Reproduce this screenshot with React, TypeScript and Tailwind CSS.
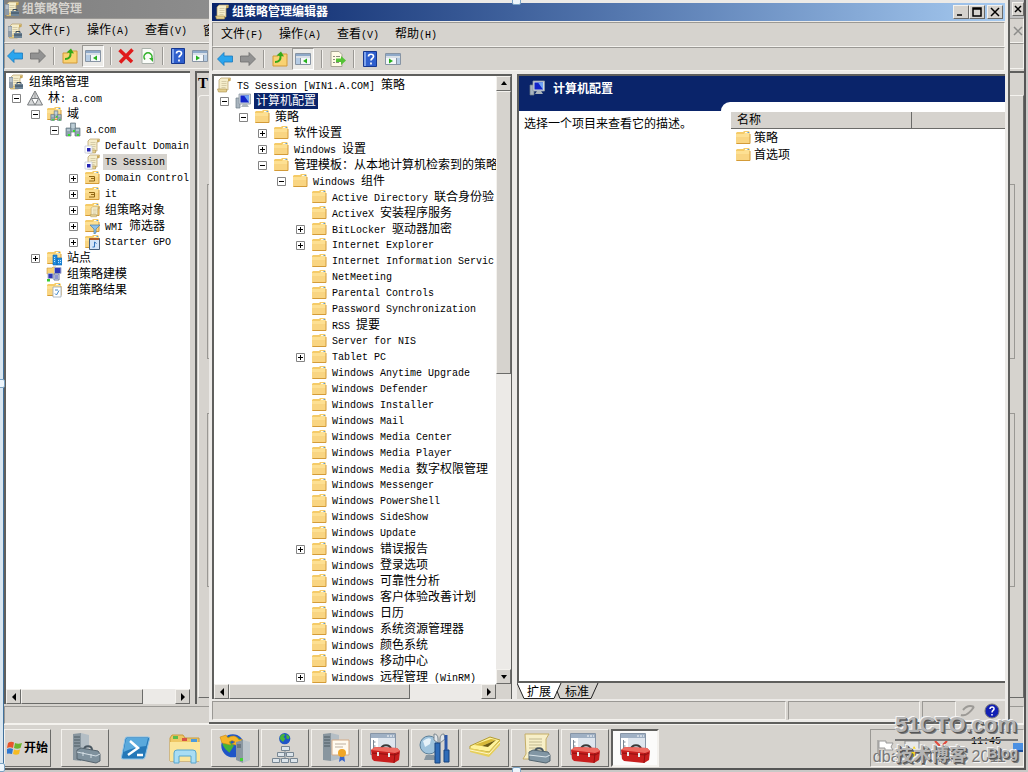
import type { ReactNode } from "react";
import clsx from "clsx";

// --- SHARED STYLES ---
const raised = "bg-[#d6d3ce] border border-t-[#f4f2ee] border-l-[#f4f2ee] border-r-[#6b6b69] border-b-[#6b6b69]";
const sunken = "border border-t-[#9a9894] border-l-[#9a9894] border-r-[#f4f2ee] border-b-[#f4f2ee]";

// Latin runs sit in a small monospace face, Chinese runs in the CJK face
function Label({ text }: { text: string }) {
  return (
    <span className="whitespace-pre">
      {text.split(/([\x20-\x7e]+)/).filter(Boolean).map((part, i) => (
        <span key={i} className={/^[\x20-\x7e]/.test(part) ? "text-[10px]" : "font-['Noto_Sans_CJK_SC',sans-serif] text-[12px]"}>
          {part}
        </span>
      ))}
    </span>
  );
}

// --- SMALL ICONS ---
function Svg({ children, size = 16 }: { children: ReactNode; size?: number }) {
  return (
    <svg width={size} height={size} viewBox={`0 0 ${size} ${size}`} className="shrink-0" aria-hidden="true">
      {children}
    </svg>
  );
}

const folderShape = (
  <>
    <path d="M1 3 2 2h6l1-1h4.5L15 2V14H1z" fill="#f5cb68" />
    <path d="M1 4h8l1-1.5h5V13.5H1z" fill="#fde093" />
    <path d="M1 7h14v7H1z" fill="#f9d582" />
    <path d="M1.500 13.500h13.500V4" fill="none" stroke="#d39b38" />
    <path d="M10 2.500h3" stroke="#fffbe8" />
    <path d="M12.500 2.500h1.500" stroke="#5798d8" />
  </>
);

const scrollShape = (
  <>
    <path d="M5 1h9.500l-1 3H12v9H3V3z" fill="#f5edcb" stroke="#b49b62" strokeWidth=".7" />
    <path d="M12 1.500h2.500V4H12z" fill="#caa95a" />
    <path d="M1.500 12h9v3h-8z" fill="#e4cf8e" stroke="#a98e4c" strokeWidth=".6" />
    <path d="M5.500 4.500h5M5.500 6.500h5M5.500 8.500h5M5.500 10.500h4" stroke="#c9bd98" strokeWidth=".7" />
  </>
);

const FolderIcon = () => <Svg>{folderShape}</Svg>;
const ScrollIcon = () => <Svg>{scrollShape}</Svg>;

const ConsoleIcon = () => (
  <Svg>
    {scrollShape}
    <path d="M1 3h4v11H1z" fill="#8e9aa5" />
    <path d="M1.500 5h3M1.500 7h3" stroke="#dfe6ec" />
    <path d="M7 10h8v5H7z" fill="#6d8497" />
    <path d="M9 10V8.500h4V10M7 12h8" fill="none" stroke="#37495a" />
  </Svg>
);

const ForestIcon = () => (
  <Svg>
    <path d="M8 1 15.500 15H.5z" fill="#d5d7d8" stroke="#777b7e" />
    <path d="M4.500 8.500h7L8 15z" fill="#fff" stroke="#777b7e" />
    <path d="M8 2v6" stroke="#999" />
  </Svg>
);

const serversShape = (
  <>
    <path d="M5.500 1h5v9h-5z" fill="#9fb2bd" stroke="#657680" strokeWidth=".7" />
    <path d="M1 6h5v8H1zM10 6h5v8h-5z" fill="#8ea3af" stroke="#657680" strokeWidth=".7" />
    <path d="M6.500 3h3M6.500 5h3M2 8h3M11 8h3" stroke="#dce9ef" />
    <path d="M3 12h2v2H3zM12 12h2v2h-2zM8 8h2v2H8z" fill="#34dc2c" />
  </>
);
const DomainIcon = () => <Svg>{serversShape}</Svg>;

const DomainsFolderIcon = () => (
  <Svg>
    {folderShape}
    <g transform="translate(4 4) scale(.75)">{serversShape}</g>
  </Svg>
);

const LinkIcon = () => (
  <Svg>
    <g transform="translate(1 0)">{scrollShape}</g>
    <path d="M1 8h7v7H1z" fill="#fff" stroke="#c5cbd8" strokeWidth=".8" />
    <path d="M3 10h3.500v3.500H3z" fill="#2525b5" />
  </Svg>
);

const OuIcon = () => (
  <Svg>
    {folderShape}
    <path d="M5 6.500h5.500v4.500H5M7 8.500h3" fill="none" stroke="#8f6614" />
  </Svg>
);

const ObjectsIcon = () => (
  <Svg>
    {folderShape}
    <g transform="translate(5 4) scale(.72)">{scrollShape}</g>
  </Svg>
);

const FilterIcon = () => (
  <Svg>
    {folderShape}
    <path d="M6 7h10l-4 4v4l-2 1v-5z" fill="#8dc1ea" stroke="#4a7da8" strokeWidth=".7" />
  </Svg>
);

const StarterIcon = () => (
  <Svg>
    {folderShape}
    <path d="M5.500 4.500h10v11h-10z" fill="#d3e6f8" stroke="#47617d" />
    <path d="M6 4h9v2H6z" fill="#b25e2c" />
    <path d="M10.500 8v5M10.500 8l2 1.500M8.500 13h2" fill="none" stroke="#2f74bd" />
  </Svg>
);

const SitesIcon = () => (
  <Svg>
    {folderShape}
    <path d="M7 5h4v10H7zM11 8h5v7h-5z" fill="#218de0" stroke="#0f62ad" strokeWidth=".6" />
    <path d="M8.500 7v6M12.500 10v3M14.500 10v3" stroke="#bfe3ff" strokeDasharray="1 1" />
  </Svg>
);

const ModelingIcon = () => (
  <Svg>
    <path d="M1 2h5l1-1h3v7H1z" fill="#f7d276" stroke="#cf9a3c" strokeWidth=".6" />
    <path d="M8.500 1.500h6.500v6H8.500zM2 7.500h5v5H2z" fill="#3038b8" stroke="#aab3cc" />
    <path d="M8 8h5v6H8z" fill="#e8edf5" stroke="#6f7ca0" />
    <path d="M9 10h3M9 12h3" stroke="#3543b5" />
    <path d="M1 13h3v2.500H1z" fill="#37c832" />
  </Svg>
);

const ResultsIcon = () => (
  <Svg>
    {folderShape}
    <path d="M7 5h8v10H7z" fill="#fff" stroke="#9aa8b6" strokeWidth=".8" />
    <path d="M9 11.500 10.500 13 13 8.500M9 8h3" fill="none" stroke="#3f86ca" />
  </Svg>
);

const ComputerIcon = () => (
  <Svg>
    <path d="M1 5h4v10H1z" fill="#a9b5bf" stroke="#6f7d88" strokeWidth=".7" />
    <path d="M4 1h11.500v10H4z" fill="#cfd8df" stroke="#8b98a3" strokeWidth=".8" />
    <path d="M5.500 2.500h8.500v7H5.500z" fill="#1224c8" />
    <path d="M9 2.500h5v7z" fill="#6da2f5" />
    <path d="M8 11h4l2 3H6z" fill="#aeb7bd" />
  </Svg>
);

// --- TOOLBAR ICONS ---
const Arrow = ({ forward }: { forward?: boolean }) => (
  <Svg>
    {forward ? (
      <path d="M15.500 8 9 1.500V5H.5v6H9v3.500z" fill="#929292" stroke="#6e6e6e" strokeWidth=".8" />
    ) : (
      <path d="M.5 8 7 1.500V5h8.500v6H7v3.500z" fill="#2ba5ee" stroke="#1b79bd" strokeWidth=".8" />
    )}
  </Svg>
);

const UpIcon = () => (
  <Svg>
    <path d="M1 5h5l1-2h8v12H1z" fill="#f9d272" stroke="#d39b38" />
    <path d="M3 11c4 0 6-2 5.500-7" fill="none" stroke="#35a818" strokeWidth="2" />
    <path d="M4.500 4.500 9 .5l3 5z" fill="#35a818" />
  </Svg>
);

const PaneIcon = ({ flip }: { flip?: boolean }) => (
  <Svg>
    <path d="M.5 2.500h15v11H.5z" fill="#f4f7fa" stroke="#8794a4" />
    <path d="M1 3h14v2H1z" fill="#8fa9c8" />
    <path d="M1 5h14v2H1z" fill="#d9e0e8" />
    <path d={flip ? "M11.500 7v6" : "M5.500 7v6"} stroke="#8794a4" />
    <path d={flip ? "M4 7.500v5L8 10z" : "M12 7.500v5L8 10z"} fill="#25b11c" />
    {!flip && <path d="M1 7h4v6H1z" fill="#b6cce4" />}
    {flip && <path d="M12 7h3v6h-3z" fill="#b6cce4" />}
  </Svg>
);

const DeleteIcon = () => (
  <Svg>
    <path d="M1.500 2 14 14M14.500 1.500 2 14.500" stroke="#e01b1b" strokeWidth="3.500" />
  </Svg>
);

const RefreshIcon = () => (
  <Svg>
    <path d="M2 .5h9l3 3v12H2z" fill="#fbfdf9" stroke="#abb1ab" />
    <path d="M5 11.500a4 4 0 1 1 6 0" fill="none" stroke="#35b22c" strokeWidth="1.600" />
    <path d="M9 10h4v4z" fill="#35b22c" />
  </Svg>
);

const ExportIcon = () => (
  <Svg>
    <path d="M1 .5h8l3 3v12H1z" fill="#fffbe6" stroke="#a7a594" />
    <path d="M3 5.500h2M3 8.500h2M3 11.500h2M6 5.500h4M6 11.500h3" stroke="#8c8b7d" />
    <path d="M6 7.500h5V5l5 4.500-5 4.500v-3H6z" fill="#54c335" />
  </Svg>
);

const HelpIcon = () => (
  <Svg>
    <path d="M1.500.5h13v15h-13z" fill="#2f5fcd" stroke="#16378f" />
    <path d="M2 1h2v14H2z" fill="#7ea3ec" />
    <path d="M6.500 5.500c0-3 5-3 5 0 0 2-2.500 2-2.500 4M9 11.500v2" fill="none" stroke="#fff" strokeWidth="1.700" />
  </Svg>
);

const MenuBar = ({ items }: { items: string[] }) => (
  <nav className="flex items-center gap-4">
    {items.map((item) => (
      <button key={item} className="shrink-0 leading-4"><Label text={item} /></button>
    ))}
  </nav>
);

const Tool = ({ name, pressed, children }: { name: string; pressed?: boolean; children: ReactNode }) => (
  <button
    aria-label={name}
    className={clsx("flex h-[22px] shrink-0 items-center justify-center", pressed ? "w-[22px] border border-t-[#9a9894] border-l-[#9a9894] border-r-white border-b-white bg-[#ecebe8]" : "w-4")}
  >
    {children}
  </button>
);

const Sep = () => <span className="h-[18px] w-[2px] shrink-0 border-l border-[#9a9894] border-r border-r-[#f4f2ee]" />;

// --- SCROLL BARS ---
const arrows = {
  up: "M4 1 7 5H1z",
  down: "M4 6 1 2h6z",
  left: "M2 4 6 0v8z",
  right: "M6 4 2 0v8z",
};

const ScrollButton = ({ dir }: { dir: keyof typeof arrows }) => (
  <button aria-label={dir} className={clsx("flex size-[15px] shrink-0 items-center justify-center", raised)}>
    <Svg size={8}><path d={arrows[dir]} fill="#000" /></Svg>
  </button>
);

const HScroll = ({ thumb }: { thumb: number }) => (
  <div className="flex h-[15px] flex-1 bg-[#eceae7]">
    <ScrollButton dir="left" />
    <div className="flex flex-1">
      <div className={raised} style={{ width: `${thumb}%` }} />
    </div>
    <ScrollButton dir="right" />
  </div>
);

// --- TREES ---
type Node = { level: number; text: string; icon?: () => ReactNode; state?: "open" | "closed"; selected?: "focus" | "idle" };

const consoleTree: Node[] = [
  { level: 0, text: "组策略管理", icon: ConsoleIcon },
  { level: 1, text: "林: a.com", icon: ForestIcon, state: "open" },
  { level: 2, text: "域", icon: DomainsFolderIcon, state: "open" },
  { level: 3, text: "a.com", icon: DomainIcon, state: "open" },
  { level: 4, text: "Default Domain", icon: LinkIcon },
  { level: 4, text: "TS Session", icon: LinkIcon, selected: "idle" },
  { level: 4, text: "Domain Control", icon: OuIcon, state: "closed" },
  { level: 4, text: "it", icon: OuIcon, state: "closed" },
  { level: 4, text: "组策略对象", icon: ObjectsIcon, state: "closed" },
  { level: 4, text: "WMI 筛选器", icon: FilterIcon, state: "closed" },
  { level: 4, text: "Starter GPO", icon: StarterIcon, state: "closed" },
  { level: 2, text: "站点", icon: SitesIcon, state: "closed" },
  { level: 2, text: "组策略建模", icon: ModelingIcon },
  { level: 2, text: "组策略结果", icon: ResultsIcon },
];

const components: [string, boolean?][] = [
  ["Active Directory 联合身份验"],
  ["ActiveX 安装程序服务"],
  ["BitLocker 驱动器加密", true],
  ["Internet Explorer", true],
  ["Internet Information Servic"],
  ["NetMeeting"],
  ["Parental Controls"],
  ["Password Synchronization"],
  ["RSS 提要"],
  ["Server for NIS"],
  ["Tablet PC", true],
  ["Windows Anytime Upgrade"],
  ["Windows Defender"],
  ["Windows Installer"],
  ["Windows Mail"],
  ["Windows Media Center"],
  ["Windows Media Player"],
  ["Windows Media 数字权限管理"],
  ["Windows Messenger"],
  ["Windows PowerShell"],
  ["Windows SideShow"],
  ["Windows Update"],
  ["Windows 错误报告", true],
  ["Windows 登录选项"],
  ["Windows 可靠性分析"],
  ["Windows 客户体验改善计划"],
  ["Windows 日历"],
  ["Windows 系统资源管理器"],
  ["Windows 颜色系统"],
  ["Windows 移动中心"],
  ["Windows 远程管理 (WinRM)", true],
];

const policyTree: Node[] = [
  { level: 0, text: "TS Session [WIN1.A.COM] 策略", icon: ScrollIcon },
  { level: 1, text: "计算机配置", icon: ComputerIcon, state: "open", selected: "focus" },
  { level: 2, text: "策略", state: "open" },
  { level: 3, text: "软件设置", state: "closed" },
  { level: 3, text: "Windows 设置", state: "closed" },
  { level: 3, text: "管理模板：从本地计算机检索到的策略", state: "open" },
  { level: 4, text: "Windows 组件", state: "open" },
  ...components.map(([text, closed]): Node => ({ level: 5, text, state: closed ? "closed" : undefined })),
];

function Tree({ nodes }: { nodes: Node[] }) {
  return (
    <ul className="min-w-0 flex-1 overflow-hidden bg-white pt-px pl-[2px]">
      {nodes.map((node) => {
        const Icon = node.icon ?? FolderIcon;
        return (
          <li key={node.text} className="flex h-4 items-center">
            <span className={clsx("flex shrink-0 justify-end", node.level > 0 && "pr-[6px]")} style={{ width: node.level * 19 }}>
              {node.state && (
                <button aria-label={node.state === "open" ? "折叠" : "展开"}>
                  <Svg size={9}>
                    <path d="M.5.5h8v8h-8z" fill="#fff" stroke="#848484" />
                    <path d={node.state === "open" ? "M2 4.500h5" : "M2 4.500h5M4.500 2v5"} stroke="#000" />
                  </Svg>
                </button>
              )}
            </span>
            <Icon />
            <span
              className={clsx(
                "ml-[3px] flex h-4 shrink-0 items-center px-[2px] leading-4",
                node.selected === "focus" && "bg-[#0a246a] text-white",
                node.selected === "idle" && "bg-[#d6d3ce]",
              )}
            >
              <Label text={node.text} />
            </span>
          </li>
        );
      })}
    </ul>
  );
}

// --- TASKBAR ICONS ---
const serverTower = (
  <>
    <path d="m4 2 8-1v28l-8-1z" fill="#89969f" />
    <path d="m12 1 8 2v24l-8 2z" fill="#b4bec5" />
    <path d="M5 5h6M5 8h6M5 11h6M5 14h6" stroke="#4f5c65" />
  </>
);

const ServerManager = () => (
  <Svg size={32}>
    {serverTower}
    <path d="M15 18c0-5 8-5 8 0" fill="none" stroke="#4b5862" strokeWidth="2" />
    <path d="m8 18 4-2 17 3 2 3v7l-4 2-19-4z" fill="#7f919d" stroke="#56646e" />
    <path d="m8 20 19 4 4-2M14 20v4M22 22v4" fill="none" stroke="#d5dfe5" />
  </Svg>
);

const PowerShell = () => (
  <Svg size={32}>
    <path d="M8 5h21q2 0 1.500 2L26 25q-.5 2-2.500 2H4q-2 0-1.500-2L6 7q.5-2 2-2z" fill="#2578b8" stroke="#8fc4e8" />
    <path d="M8 6h21l-2 8Q15 15 4.500 20L7 7z" fill="#5aa9dc" />
    <path d="m11 9 8 7-10 7M18 23h6" fill="none" stroke="#fff" strokeWidth="2.500" />
  </Svg>
);

const Explorer = () => (
  <Svg size={32}>
    <path d="M1 6 3 3h11l2 3h14v23H1z" fill="#efc765" stroke="#c89c3e" />
    <path d="M4 4h5v3H4z" fill="#5bbd4d" />
    <path d="M13 6h5v3h-5z" fill="#d85246" />
    <path d="M22 7h6v3h-6z" fill="#4b9bdd" />
    <path d="M1 10h30v19H1z" fill="#fbe59b" />
    <path d="M5 31V21q0-3 3-3h16q3 0 3 3v10h-5v-7H10v7z" fill="#a9ddf4" stroke="#57a6cf" />
  </Svg>
);

const Globe = () => (
  <>
    <circle cx="12" cy="12" r="10" fill="#1f55c8" />
    <path d="M5 6q5-4 8-1l-3 4 3 3-4 6q-4-3-6-7zM15 4l6 4-2 5-4-2z" fill="#46b43a" />
  </>
);

const IisManager = () => (
  <Svg size={32}>
    <g transform="scale(1.15)"><Globe /></g>
    <path d="M1 5 7 3l2 3q7-5 11 2l3-1-3 7-7-2 3-2q-3-3-6 0l2 3-9-2z" fill="#f6b528" stroke="#c98716" strokeWidth=".6" />
    <path d="m17 10 7-2v23l-7-3z" fill="#8b98a2" />
    <path d="m24 8 7 2v18l-7 3z" fill="#bcc5cb" />
    <path d="M19 12v4M21 12v4" stroke="#4c5963" />
    <path d="M21 26h3v3h-3z" fill="#43d236" />
  </Svg>
);

const Network = () => (
  <Svg size={32}>
    <g transform="translate(9 0) scale(.56)"><Globe /></g>
    <path d="M16 14v16M10 21h12M6 27h20" stroke="#7c8c99" />
    <path d="M12.500 14.500h8v4h-8zM8.500 20.500h7v4h-7zM17.500 20.500h7v4h-7zM3.500 26.500h7v4h-7zM12.500 26.500h7v4h-7zM21.500 26.500h7v4h-7z" fill="#dde5eb" stroke="#788793" />
  </Svg>
);

const Certificates = () => (
  <Svg size={32}>
    {serverTower}
    <path d="M13 8h17v15H13z" fill="#fffaf0" stroke="#d4ab87" />
    <path d="M16 12h11M16 15h8" stroke="#bdb0a2" />
    <path d="m21 23-1 7 3-2 3 2-1-7z" fill="#3763c9" />
    <circle cx="23" cy="21" r="4" fill="#f0a526" />
  </Svg>
);

const Tools = () => (
  <Svg size={32}>
    <circle cx="10" cy="13" r="9" fill="#9fc3dc" stroke="#5a7f99" />
    <path d="M4 9q5-4 8-2l-1 5-5 3z" fill="#e6f2f9" />
    <path d="M7 23h8l3 5H5z" fill="#8796a1" />
    <path d="M15 2q4 0 4 5v4l-4-3zM25 2q-4 0-4 5v4l5-4z" fill="#e3e7ea" stroke="#7a868f" />
    <path d="M16 11h5v20h-5zM25 18h5v12h-5z" fill="#2e6cb8" stroke="#16427c" />
    <path d="M27 3v15" stroke="#2b56a8" strokeWidth="3" />
  </Svg>
);

const Notepad = () => (
  <Svg size={32}>
    <path d="m1 14 20-9 10 3-11 12-19-3z" fill="#fff39b" stroke="#b39b30" />
    <path d="m1 16 19 4L31 8v5L20 25 1 20z" fill="#e6cf5c" />
    <path d="m1 18 19 4 11-12" fill="none" stroke="#fff6c8" />
    <path d="m5 13 17-6 5 1-14 6z" fill="#d7b838" />
    <path d="m13 14 14-6-8 7z" fill="#6b5a14" />
  </Svg>
);

const PolicyTool = () => (
  <Svg size={32}>
    <path d="M6 2h24l-3 5v20H4l3-5z" fill="#f7efc8" stroke="#c6ae67" />
    <path d="M10 7h13M10 10h13M10 13h13M10 16h9" stroke="#c1b88f" />
    <path d="M16 20c0-5 8-5 8 0" fill="none" stroke="#4b5862" strokeWidth="2" />
    <path d="m10 20 4-2 15 2 2 3v6l-4 2-17-3z" fill="#8196a4" stroke="#536570" />
    <path d="m10 23 17 2 4-2" fill="none" stroke="#dbe5ea" />
  </Svg>
);

const RedToolbox = () => (
  <Svg size={32}>
    <path d="M1.500 1.500h25v21h-25z" fill="#dfe6ee" stroke="#8795a6" />
    <path d="M2 2h24v4H2z" fill="#9fb0c4" />
    <path d="M18 4h2M21 4h2M24 4h1" stroke="#fff" />
    <path d="M2 6h7v16H2z" fill="#fff" />
    <path d="M4.500 8v11M4.500 10h2M4.500 14h2" stroke="#7b8794" fill="none" />
    <path d="M12 17c1-5 9-5 10 0" fill="none" stroke="#3a3a3a" strokeWidth="2" />
    <path d="m2 18 4-3 22 1 3 3-1 9-5 3-20-2-2-2z" fill="#c81e1e" />
    <path d="m2 18 4-3 22 1 3 3-5 2z" fill="#ee6a60" />
    <path d="m3 21 23 2 4-2M26 21l-1 10" fill="none" stroke="#8f1010" />
    <path d="M8 20h2v4H8zM19 21h2v4h-2z" fill="#e8e8e8" />
  </Svg>
);

const tasks: { name: string; icon: () => ReactNode; look: "flat" | "raised" | "active" }[] = [
  { name: "服务器管理器", icon: ServerManager, look: "raised" },
  { name: "PowerShell", icon: PowerShell, look: "flat" },
  { name: "资源管理器", icon: Explorer, look: "flat" },
  { name: "IIS 管理器", icon: IisManager, look: "raised" },
  { name: "网络", icon: Network, look: "raised" },
  { name: "证书颁发机构", icon: Certificates, look: "raised" },
  { name: "控制台 1", icon: RedToolbox, look: "raised" },
  { name: "管理工具", icon: Tools, look: "raised" },
  { name: "便笺", icon: Notepad, look: "raised" },
  { name: "组策略管理", icon: PolicyTool, look: "raised" },
  { name: "控制台 2", icon: RedToolbox, look: "raised" },
  { name: "控制台 3", icon: RedToolbox, look: "active" },
];

function Taskbar() {
  return (
    <footer className="flex h-[44px] shrink-0 items-center border-t border-[#f4f2ee] pt-[2px]">
      <button className={clsx("mr-[10px] flex h-[38px] w-[47px] shrink-0 items-center justify-center gap-px font-bold", raised)}>
        <Svg>
          <path d="M1 3q3-2 6-.5L6 8Q3 6.500 0 8z" fill="#e8552b" />
          <path d="M8 3q3 1.500 7 0l-1.500 5Q10 9.500 7 8z" fill="#6cb52d" />
          <path d="M0 9q3-1.500 6 0l-1 5Q2 13-1 14z" fill="#2f78d0" />
          <path d="M7 9.500q3 1.500 6 0L12 14q-3 1.500-6 0z" fill="#f6bb22" />
        </Svg>
        <Label text="开始" />
      </button>
      <div className="flex gap-[2px]">
        {tasks.map(({ name, icon: Icon, look }) => (
          <button
            key={name}
            aria-label={name}
            className={clsx(
              "flex h-[38px] w-12 shrink-0 items-center justify-center",
              look === "raised" && raised,
              look === "active" && "border-2 border-t-[#5f5f5d] border-l-[#5f5f5d] border-r-[#f4f2ee] border-b-[#f4f2ee] bg-[#fbfbfa]",
            )}
          >
            <Icon />
          </button>
        ))}
      </div>
      <div className={clsx("ml-auto flex h-[38px] w-[154px] items-center gap-2 pl-1", sunken)}>
        <Svg size={20}>
          <path d="M3 2v16" stroke="#888" />
          <path d="M4 3h7v2h7l-2 4 2 3h-8v-2H4z" fill="#fff" stroke="#999" />
        </Svg>
        <Svg size={20}>
          <path d="M2 3h14v10H2z" fill="#e9e9e9" stroke="#8b8b8b" />
          <path d="m11 8 7 11H6z" fill="#f7d117" />
        </Svg>
        <Svg size={20}><path d="m4 3 12 12M16 3 4 15" stroke="#e04a3c" strokeWidth="2" /></Svg>
        <span className="mt-1 ml-3 self-start text-[10px] leading-4">11:45</span>
        <span className="ml-auto h-[9px] w-[10px] border-b-2 border-[#1c4f9c] bg-[#4b90e2]" />
      </div>
    </footer>
  );
}

// --- BACKGROUND CONSOLE ---
function ConsoleWindow() {
  return (
    <section className="flex min-h-0 flex-1 flex-col">
      <header className="flex h-[18px] shrink-0 items-center gap-[2px] bg-linear-to-r from-[#808080] to-[#c0c0c0] font-bold text-[#d6d3ce]">
        <ConsoleIcon />
        <Label text="组策略管理" />
        <button aria-label="关闭" className={clsx("ml-auto flex h-[14px] w-3 items-center justify-center text-black", raised)}>
          <Svg size={8}><path d="m1 1 6 6M7 1 1 7" stroke="#000" strokeWidth="1.500" /></Svg>
        </button>
      </header>
      <div className={clsx("flex h-[25px] shrink-0 items-center gap-[6px] pl-[2px]", sunken)}>
        <ConsoleIcon />
        <MenuBar items={["文件(F)", "操作(A)", "查看(V)", "窗"]} />
        <span className="ml-auto"><Svg size={10}><path d="m1 1 8 8M9 1 1 9" stroke="#8c8c8a" strokeWidth="1.500" /></Svg></span>
      </div>
      <div className={clsx("flex h-[26px] shrink-0 items-center pl-[2px]", sunken)}>
        <div className="flex gap-[7px]">
          <Tool name="后退"><Arrow /></Tool>
          <Tool name="前进"><Arrow forward /></Tool>
          <div className="flex items-center"><Sep /></div>
          <Tool name="上一级"><UpIcon /></Tool>
        </div>
        <div className="ml-1 flex items-center gap-[6px]">
          <Tool name="显示树" pressed><PaneIcon /></Tool>
          <Sep />
          <Tool name="删除"><DeleteIcon /></Tool>
          <Tool name="刷新"><RefreshIcon /></Tool>
          <Sep />
          <Tool name="帮助"><HelpIcon /></Tool>
          <Tool name="操作窗格"><PaneIcon flip /></Tool>
        </div>
      </div>
      <div className="flex min-h-0 flex-1 gap-[5px] pt-[2px]">
        <div className="flex w-[186px] shrink-0 flex-col border-t-2 border-l-2 border-[#5f5f5d]">
          <div className="flex min-h-0 flex-1"><Tree nodes={consoleTree} /></div>
          <div className="flex"><HScroll thumb={79} /></div>
        </div>
        <div className="flex min-w-0 flex-1 flex-col border-t-2 border-l-2 border-[#5f5f5d] pl-px">
          <div className="h-[22px] font-['Liberation_Serif',serif] text-[15px] leading-[20px] font-bold">T</div>
          <div className="mb-[6px] flex min-h-0 flex-1 flex-col gap-[54px] rounded-tl-[4px] border border-t-[#f4f2ee] border-l-[#f4f2ee] border-r-[#6b6b69] border-b-[#6b6b69] px-2 pt-[88px] pb-[110px]">
            <div className="flex-1 border border-[#9a9894]" />
            <div className="flex-1 border border-[#9a9894]" />
          </div>
        </div>
      </div>
      <div className={clsx("mt-[2px] h-[18px] shrink-0", sunken)} />
    </section>
  );
}

// --- EDITOR WINDOW ---
const CaptionButton = ({ name, d }: { name: string; d: string }) => (
  <button aria-label={name} className={clsx("flex h-[14px] w-4 items-center justify-center", raised)}>
    <Svg size={10}><path d={d} fill="none" stroke="#000" strokeWidth="1.500" /></Svg>
  </button>
);

function EditorWindow() {
  return (
    <section className="absolute top-0 right-[18px] bottom-[48px] left-[209px] flex flex-col border-r-2 border-b-2 border-[#5f5f5d] bg-[#eceae7] pt-[3px] pr-[3px] pb-[2px] pl-[3px]">
      <header className="flex h-[18px] shrink-0 items-center bg-linear-to-r from-[#0a246a] to-[#a6caf0] pr-[2px] pl-[2px] font-bold text-white">
        <ScrollIcon />
        <h1 className="ml-[2px] leading-4"><Label text="组策略管理编辑器" /></h1>
        <div className="ml-auto flex">
          <CaptionButton name="最小化" d="M1 8h5" />
          <CaptionButton name="最大化" d="M1 1h8v8H1zM1 2h8" />
          <span className="w-[2px]" />
          <CaptionButton name="关闭" d="m1 1 8 8M9 1 1 9" />
        </div>
      </header>
      <div className={clsx("mt-px flex h-[25px] shrink-0 items-center bg-[#d6d3ce] pl-2", sunken)}>
        <MenuBar items={["文件(F)", "操作(A)", "查看(V)", "帮助(H)"]} />
      </div>
      <div className={clsx("flex h-[24px] shrink-0 items-center bg-[#d6d3ce] pl-1", sunken)}>
        <div className="flex items-center gap-[7px]">
          <Tool name="后退"><Arrow /></Tool>
          <Tool name="前进"><Arrow forward /></Tool>
          <Sep />
          <Tool name="上一级"><UpIcon /></Tool>
        </div>
        <div className="ml-1 flex items-center gap-[7px]">
          <Tool name="显示树" pressed><PaneIcon /></Tool>
          <Sep />
          <Tool name="导出列表"><ExportIcon /></Tool>
          <Sep />
          <Tool name="帮助"><HelpIcon /></Tool>
          <Tool name="操作窗格"><PaneIcon flip /></Tool>
        </div>
      </div>

      <div className="flex min-h-0 flex-1 gap-[5px] pt-[3px]">
        {/* Policy tree */}
        <div className="flex w-[300px] shrink-0 flex-col border-t-2 border-r border-l-2 border-[#5f5f5d]">
          <div className="flex min-h-0 flex-1">
            <Tree nodes={policyTree} />
            <div className="flex w-[15px] shrink-0 flex-col bg-[#eceae7]">
              <ScrollButton dir="up" />
              <div className="flex-1"><div className={clsx("h-[49%]", raised)} /></div>
              <ScrollButton dir="down" />
            </div>
          </div>
          <div className="flex bg-[#d6d3ce] pr-[15px]"><HScroll thumb={72} /></div>
        </div>

        {/* Details */}
        <div className="flex min-w-0 flex-1 flex-col">
          <div className="flex min-h-0 flex-1 border-t-2 border-b-2 border-l-2 border-[#5f5f5d] bg-[#0a246a]">
            <div className="flex w-[202px] shrink-0 flex-col">
              <div className="flex h-[35px] items-start gap-2 pt-[4px] pl-[10px] font-bold text-white">
                <ComputerIcon />
                <h2 className="leading-4"><Label text="计算机配置" /></h2>
              </div>
              <p className="flex-1 bg-white pt-1 pl-[5px] leading-4"><Label text="选择一个项目来查看它的描述。" /></p>
            </div>
            <div className="mt-[26px] min-w-0 flex-1 rounded-tl-[9px] bg-white pt-[10px] pl-[10px]">
              <table className="w-full table-fixed border-collapse text-left">
                <thead>
                  <tr className="bg-[#d6d3ce]">
                    <th className="w-[180px] border-r border-b border-[#6b6b69] p-0 pl-[6px] font-normal">
                      <span className="flex h-4 items-center leading-4"><Label text="名称" /></span>
                    </th>
                    <th className="border-b border-[#6b6b69] p-0" />
                  </tr>
                </thead>
                <tbody>
                  {["策略", "首选项"].map((name) => (
                    <tr key={name}>
                      <td className="p-0 pl-1">
                        <span className="flex h-[17px] items-center gap-[3px] leading-4"><FolderIcon /><Label text={name} /></span>
                      </td>
                      <td className="p-0" />
                    </tr>
                  ))}
                </tbody>
              </table>
            </div>
          </div>
          <div className="flex h-4 shrink-0 bg-[#d6d3ce] leading-4">
            <svg width="10" height="16" viewBox="0 0 10 16" aria-hidden="true"><path d="M0 0h10v15H7z" fill="#fff" /><path d="m0 0 7 15.500h3" fill="none" stroke="#222" /></svg>
            <button className="border-b border-[#222] bg-white"><Label text="扩展" /></button>
            <svg width="14" height="16" viewBox="0 0 14 16" aria-hidden="true"><path d="M0 0h10L3 15H0z" fill="#fff" /><path d="M0 15.500h3L10 0M6 8l3 7.500h5" fill="none" stroke="#222" /></svg>
            <button className="border-b border-[#222]"><Label text="标准" /></button>
            <svg width="10" height="16" viewBox="0 0 10 16" aria-hidden="true"><path d="M0 15.500h2L9 0" fill="none" stroke="#222" /></svg>
          </div>
        </div>
      </div>

      <div className="mt-[2px] flex h-[19px] shrink-0 gap-[2px] bg-[#d6d3ce]">
        <div className={clsx("flex-1", sunken)} />
        <div className={clsx("w-[132px]", sunken)} />
        <div className={clsx("w-[34px]", sunken)} />
        <div className="flex w-[47px] items-center gap-[6px]">
          <Svg size={20}><path d="M3 14q6 2 13-8M5 9q5-6 11-3" fill="none" stroke="#9c9a96" strokeWidth="2" /></Svg>
          <Svg>
            <circle cx="8" cy="8" r="7" fill="#1220b4" stroke="#777" />
            <path d="M6 6c0-3 4.500-2.500 4 0-.3 1.500-2 1.500-2 3.500M8 11v1.500" fill="none" stroke="#fff" strokeWidth="1.500" />
          </Svg>
        </div>
      </div>
    </section>
  );
}

const Handle = ({ place }: { place: string }) => (
  <span className={clsx("absolute size-[9px] rounded-[2px] border border-[#7ba3c4] bg-[#eef6fc]", place)} />
);

export default function App() {
  return (
    <main className="relative flex h-screen flex-col overflow-hidden bg-[#c9c9c7] pr-[2px] pb-[2px] font-['Liberation_Mono','Noto_Sans_CJK_SC',monospace] text-[12px] text-black">
      <div className="flex min-h-0 flex-1 border-l-4 border-l-[#d9e6f0]">
        <div className="flex min-w-0 flex-1 flex-col border-r-2 border-b-2 border-[#555] bg-[#d6d3ce] shadow-[-1px_0_0_#41719c]">
          <ConsoleWindow />
          <Taskbar />
        </div>
      </div>
      <EditorWindow />

      {/* Watermark */}
      <span className="absolute right-[22px] bottom-[5px] font-['Liberation_Sans',sans-serif] text-[16px] leading-5 text-[#777] [text-shadow:1px_1px_0_#f4f4f4]">
        dbaduiyuninc 2011
      </span>
      <div className="absolute right-[10px] bottom-[7px] w-[123px] font-['Liberation_Sans',sans-serif] font-bold text-[#b5b5b5] [text-shadow:1px_1px_0_#555,2px_2px_0_#777,-1px_-1px_0_#f4f4f4]">
        <div className="text-[22px] leading-7 whitespace-nowrap">51CTO.com</div>
        <div className="flex items-center justify-between border-t-2 border-[#777] leading-6 whitespace-nowrap">
          <span className="font-['Noto_Sans_CJK_SC',sans-serif] text-[18px]">技术博客</span>
          <span className="text-[14px]">Blog</span>
        </div>
      </div>

      <Handle place="-left-1 top-[379px]" />
      <Handle place="-left-1 bottom-0" />
      <Handle place="-top-1 left-[512px]" />
      <Handle place="-bottom-1 left-[512px]" />
    </main>
  );
}
